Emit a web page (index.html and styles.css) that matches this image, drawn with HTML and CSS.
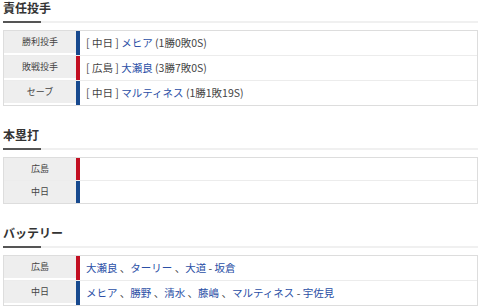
FILE: index.html
```html
<!DOCTYPE html>
<html lang="ja">
<head>
<meta charset="utf-8">
<link rel="stylesheet" href="styles.css">
</head>
<body>
<div class="page">
  <section class="sec">
    <h2 class="sec-title">責任投手</h2>
    <div class="tbl">
      <div class="row">
        <div class="lbl">勝利投手</div>
        <div class="val dragons"><span class="txt">[ 中日 ] <a class="lnk">メヒア</a> (1勝0敗0S)</span></div>
      </div>
      <div class="row">
        <div class="lbl">敗戦投手</div>
        <div class="val carp"><span class="txt">[ 広島 ] <a class="lnk">大瀬良</a> (3勝7敗0S)</span></div>
      </div>
      <div class="row">
        <div class="lbl">セーブ</div>
        <div class="val dragons"><span class="txt">[ 中日 ] <a class="lnk">マルティネス</a> (1勝1敗19S)</span></div>
      </div>
    </div>
  </section>
  <section class="sec">
    <h2 class="sec-title">本塁打</h2>
    <div class="tbl">
      <div class="row">
        <div class="lbl">広島</div>
        <div class="val carp"></div>
      </div>
      <div class="row">
        <div class="lbl">中日</div>
        <div class="val dragons"></div>
      </div>
    </div>
  </section>
  <section class="sec">
    <h2 class="sec-title">バッテリー</h2>
    <div class="tbl">
      <div class="row">
        <div class="lbl">広島</div>
        <div class="val carp"><span class="txt"><a class="lnk">大瀬良</a> 、<a class="lnk">ターリー</a> 、<a class="lnk">大道</a> - <a class="lnk">坂倉</a></span></div>
      </div>
      <div class="row">
        <div class="lbl">中日</div>
        <div class="val dragons"><span class="txt"><a class="lnk">メヒア</a> 、<a class="lnk">勝野</a> 、<a class="lnk">清水</a> 、<a class="lnk">藤嶋</a> 、<a class="lnk">マルティネス</a> - <a class="lnk">宇佐見</a></span></div>
      </div>
    </div>
  </section>
</div>
</body>
</html>
```
FILE: styles.css
```css
html, body {
  margin: 0;
  padding: 0;
  background: #fff;
}
body {
  font-family: "Noto Sans CJK JP", "Noto Sans", sans-serif;
  color: #333;
}
.page {
  padding: 0 2px 0 3px;
  display: flex;
  flex-direction: column;
  gap: 21px;
}
.sec-title {
  position: relative;
  margin: 0 0 7px;
  font-size: 12px;
  line-height: 16px;
  font-weight: bold;
  color: #333;
  padding: 0 0 5px;
  border-bottom: 2px solid #f0f0f0;
}
.sec-title::after {
  content: "";
  position: absolute;
  left: 0;
  bottom: -2px;
  width: 38px;
  height: 2px;
  background: #555;
}
.tbl {
  border: 1px solid #ddd;
  width: 473px;
}
.row {
  display: flex;
  border-top: 1px solid #ececec;
}
.row:first-child {
  border-top: none;
}
.lbl {
  width: 72px;
  flex: none;
  background: #eee;
  text-align: center;
  font-size: 9px;
  line-height: 22px;
  height: 22px;
  color: #444;
}
.val {
  flex: 1;
  border-left: 4px solid #1b4a8f;
  padding-left: 6px;
  font-size: 10.5px;
  color: #444;
  white-space: nowrap;
}
.txt {
  display: block;
  height: 24px;
  line-height: 24px;
  overflow: hidden;
}
.val.carp {
  border-left-color: #c20f22;
}
.val.dragons {
  border-left-color: #17498e;
}
.lnk {
  color: #2b4fa6;
  text-decoration: none;
}
```
